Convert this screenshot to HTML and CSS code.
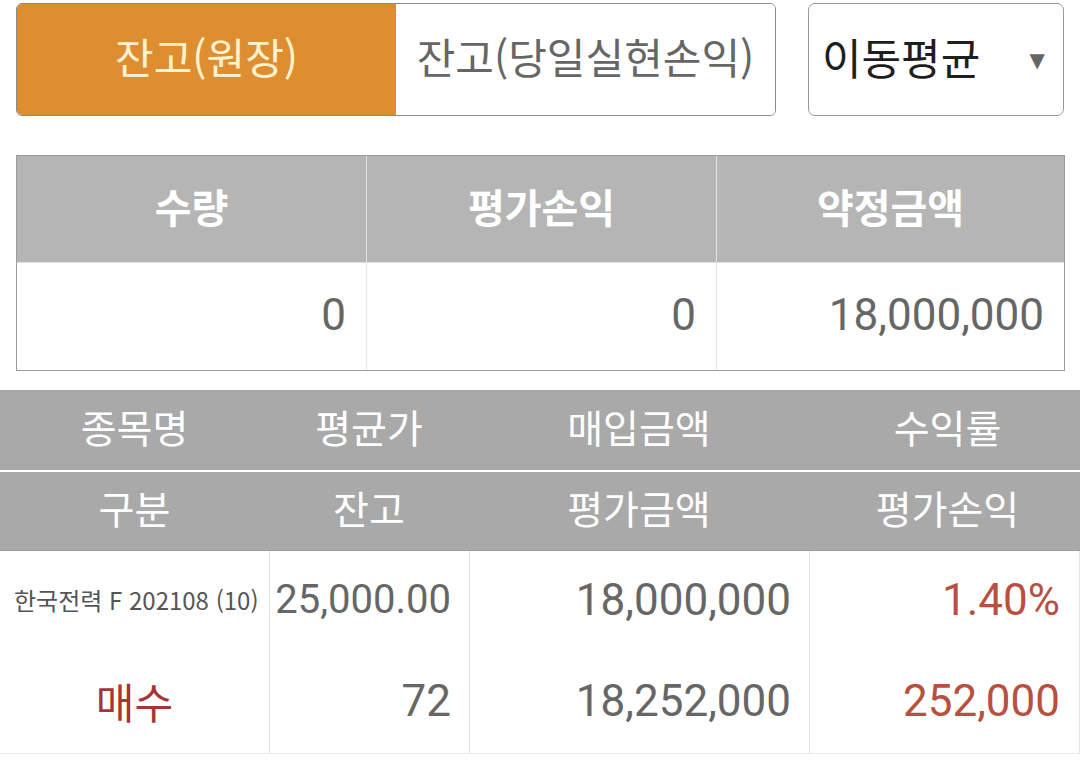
FILE: index.html
```html
<!DOCTYPE html>
<html lang="ko">
<head>
<meta charset="utf-8">
<link rel="stylesheet" href="styles.css">
</head>
<body>
<div class="topbar">
  <div class="tabs">
    <div class="tab active">잔고(원장)</div>
    <div class="tab">잔고(당일실현손익)</div>
  </div>
  <div class="select">
    <span class="select-label">이동평균</span>
    <span class="caret">▼</span>
  </div>
</div>

<div class="summary">
  <div class="sum-head">수량</div>
  <div class="sum-head">평가손익</div>
  <div class="sum-head">약정금액</div>
  <div class="sum-cell">0</div>
  <div class="sum-cell">0</div>
  <div class="sum-cell">18,000,000</div>
</div>

<div class="list">
  <div class="list-head">
    <div>종목명</div><div>평균가</div><div>매입금액</div><div>수익률</div>
  </div>
  <div class="list-head second">
    <div>구분</div><div>잔고</div><div>평가금액</div><div>평가손익</div>
  </div>
  <div class="item">
    <div class="col name">
      <div class="line small">한국전력 F 202108 (10)</div>
      <div class="line buy">매수</div>
    </div>
    <div class="col num">
      <div class="line fit">25,000.00</div>
      <div class="line">72</div>
    </div>
    <div class="col num">
      <div class="line">18,000,000</div>
      <div class="line">18,252,000</div>
    </div>
    <div class="col num red">
      <div class="line">1.40%</div>
      <div class="line">252,000</div>
    </div>
  </div>
</div>
</body>
</html>
```

FILE: styles.css
```css
* { box-sizing: border-box; }
html, body { margin: 0; padding: 0; background: #fff; }
body {
  width: 1080px;
  height: 770px;
  overflow: hidden;
  font-family: Roboto, "Noto Sans CJK KR", sans-serif;
  color: #666;
}

.topbar {
  display: flex;
  gap: 32px;
  padding: 3px 16px 0 16px;
}
.tabs {
  display: flex;
  width: 760px;
  height: 113px;
  border: 1px solid #8a8a8a;
  border-radius: 6px;
  overflow: hidden;
}
.tab {
  flex: 1;
  display: flex;
  align-items: center;
  justify-content: center;
  font-family: "Noto Sans CJK KR", sans-serif;
  font-size: 42px;
  color: #666;
  background: #fff;
  padding-bottom: 8px;
}
.tab.active {
  background: #df8d31;
  color: #fff3cf;
}
.select {
  width: 256px;
  height: 113px;
  border: 1px solid #9a9a9a;
  border-radius: 7px;
  display: flex;
  align-items: center;
  justify-content: space-between;
  padding: 0 18px 8px 13px;
}
.select-label {
  font-family: "Noto Sans CJK KR", sans-serif;
  font-size: 43px;
  color: #1e1e1e;
}
.caret {
  font-family: "DejaVu Sans", sans-serif;
  font-size: 20px;
  color: #666;
  padding-top: 8px;
}

.summary {
  margin: 39px 0 0 16px;
  width: 1049px;
  display: grid;
  grid-template-columns: 349px 350px 348px;
  grid-template-rows: 107px 107px;
  border: 1px solid #9c9c9c;
}
.sum-head {
  background: #b5b5b5;
  color: #fff;
  font-family: "Noto Sans CJK KR", sans-serif;
  font-weight: 700;
  font-size: 40px;
  display: flex;
  align-items: center;
  justify-content: center;
  border-left: 1px solid #e2e2e2;
  border-bottom: 1px solid #e2e2e2;
  padding-bottom: 6px;
}
.sum-cell {
  display: flex;
  align-items: center;
  justify-content: flex-end;
  padding: 0 20px 4px 0;
  font-size: 44px;
  color: #666;
  border-left: 1px solid #e4e4e4;
}
.sum-head:nth-child(1), .sum-cell:nth-child(4) { border-left: none; }

.list {
  margin-top: 19px;
  width: 1080px;
}
.list-head {
  display: grid;
  grid-template-columns: 269px 200px 340px 271px;
  height: 80px;
  background: #a9a9a9;
  color: #fff;
  font-family: "Noto Sans CJK KR", sans-serif;
  font-size: 39px;
}
.list-head.second {
  border-top: 2px solid #fff;
  height: 81px;
  border-bottom: 1px solid #9a9a9a;
}
.list-head > div {
  display: flex;
  align-items: center;
  justify-content: center;
  padding-bottom: 8px;
}
.list-head > div:nth-child(4) { padding-left: 6px; }

.item {
  display: grid;
  grid-template-columns: 269px 200px 340px 271px;
  height: 203px;
  border-bottom: 1px solid #e8e8e8;
}
.col {
  display: flex;
  flex-direction: column;
  border-left: 1px solid #e2e2e2;
}
.col:last-child { border-right: 1px solid #e2e2e2; }
.col.name { border-left: none; }
.line {
  height: 101px;
  display: flex;
  align-items: center;
  padding-bottom: 4px;
  font-size: 44px;
  color: #666;
}
.num .line {
  justify-content: flex-end;
  padding-right: 18px;
}
.num .line.fit { font-size: 40px; }
.num.red .line {
  color: #b8503f;
  padding-right: 19px;
}
.name .line {
  justify-content: center;
  font-family: "Noto Sans CJK KR", sans-serif;
}
.name .small {
  font-size: 24px;
  color: #555;
  white-space: nowrap;
  padding-left: 14px;
  justify-content: flex-start;
}
.name .buy {
  font-size: 42px;
  color: #a93434;
}
```
